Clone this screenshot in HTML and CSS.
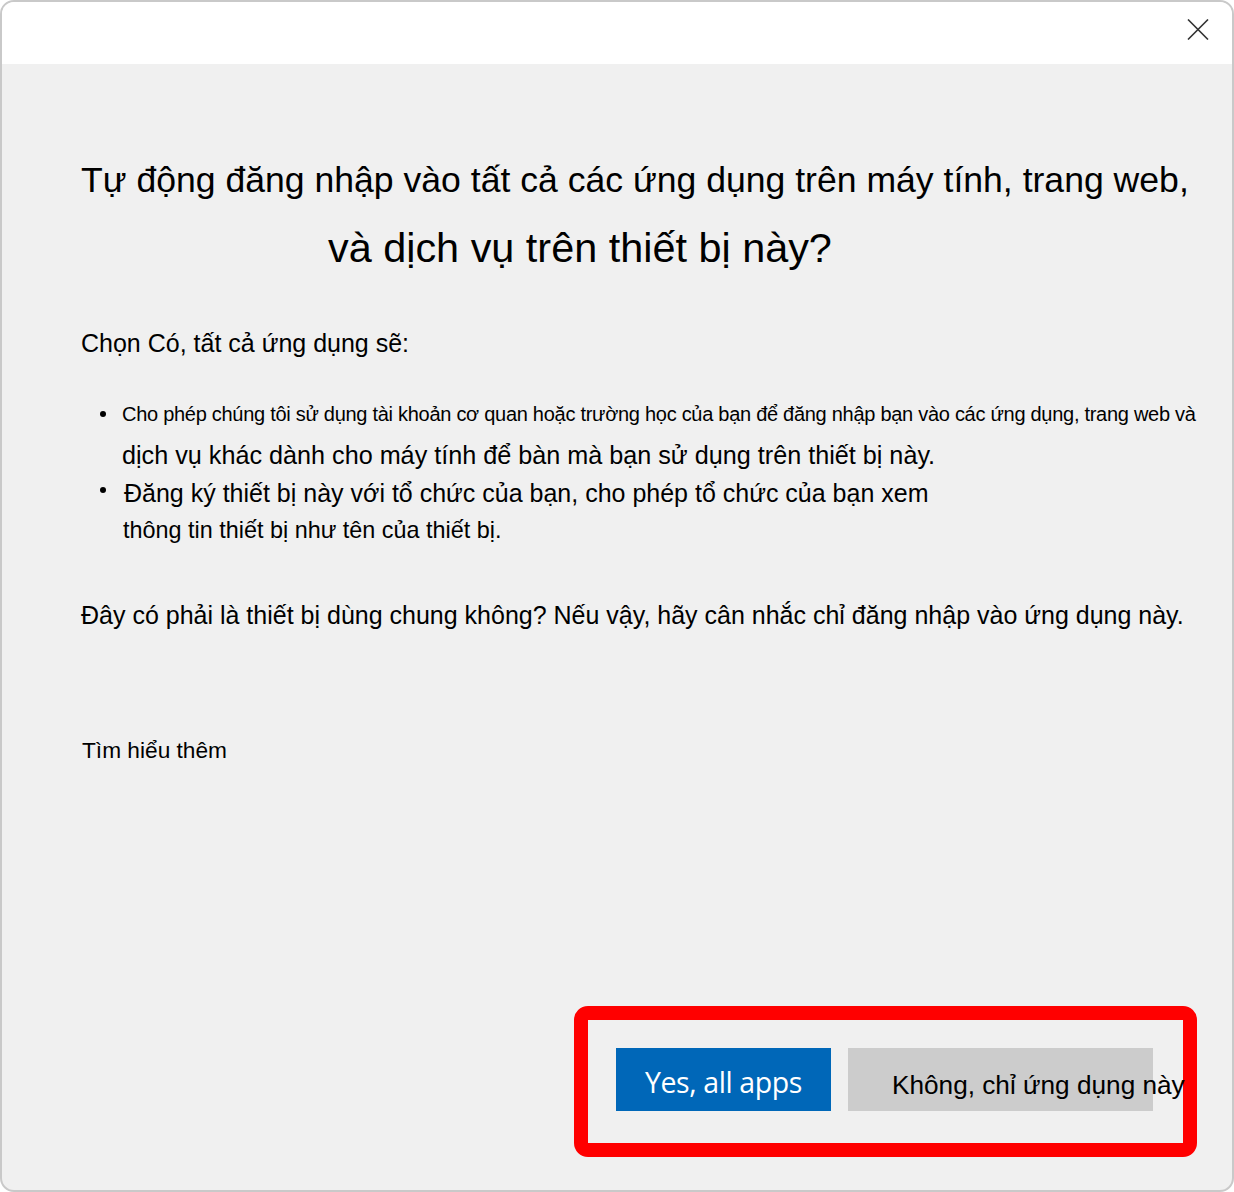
FILE: index.html
```html
<!DOCTYPE html>
<html lang="vi">
<head>
<meta charset="utf-8">
<title>Đăng nhập</title>
<link rel="stylesheet" href="styles.css">
</head>
<body>
<div class="window">
  <div class="header">
    <button class="close" aria-label="Đóng">
      <svg width="22" height="21" viewBox="0 0 22 21"><path d="M1 0.5 L21 20.5 M21 0.5 L1 20.5" stroke="#333" stroke-width="1.6" fill="none"/></svg>
    </button>
  </div>
  <div class="content">
    <h1 class="title">
      <span class="t1">Tự động đăng nhập vào tất cả các ứng dụng trên máy tính, trang web,</span>
      <span class="t2">và dịch vụ trên thiết bị này?</span>
    </h1>
    <p class="lead">Chọn Có, tất cả ứng dụng sẽ:</p>
    <ul class="list">
      <li class="item">
        <span class="dotcol"><span class="dot d1"></span></span>
        <span class="itext">
          <span class="l1">Cho phép chúng tôi sử dụng tài khoản cơ quan hoặc trường học của bạn để đăng nhập bạn vào các ứng dụng, trang web và</span>
          <span class="l2">dịch vụ khác dành cho máy tính để bàn mà bạn sử dụng trên thiết bị này.</span>
        </span>
      </li>
      <li class="item">
        <span class="dotcol"><span class="dot d2"></span></span>
        <span class="itext">
          <span class="l3">Đăng ký thiết bị này với tổ chức của bạn, cho phép tổ chức của bạn xem</span>
          <span class="l4">thông tin thiết bị như tên của thiết bị.</span>
        </span>
      </li>
    </ul>
    <p class="shared">Đây có phải là thiết bị dùng chung không? Nếu vậy, hãy cân nhắc chỉ đăng nhập vào ứng dụng này.</p>
    <p class="learn">Tìm hiểu thêm</p>
    <div class="footer">
      <div class="highlight">
        <button class="btn yes">Yes, all apps</button>
        <button class="btn no"><span>Không, chỉ ứng dụng này</span></button>
      </div>
    </div>
  </div>
</div>
</body>
</html>
```
FILE: styles.css
```css
html, body {
  margin: 0;
  padding: 0;
  background: #ffffff;
}
body {
  font-family: "Liberation Sans", Arial, sans-serif;
  color: #000;
}
.window {
  box-sizing: border-box;
  width: 1234px;
  height: 1192px;
  border: 2px solid #c9c9c9;
  border-radius: 14px;
  overflow: hidden;
  display: flex;
  flex-direction: column;
  background: #f0f0f0;
}
.header {
  height: 62px;
  flex: none;
  background: #ffffff;
  display: flex;
  justify-content: flex-end;
  align-items: flex-start;
  padding: 17px 23px 0 0;
  box-sizing: border-box;
}
.close {
  border: 0;
  background: transparent;
  padding: 0;
  margin: 0;
  width: 22px;
  height: 21px;
  display: block;
}
.close svg { display: block; }
.content {
  flex: 1;
  display: flex;
  flex-direction: column;
  padding-left: 79px;
}
.title {
  margin: 81px 0 0 0;
  font-weight: 400;
  font-size: 35.6px;
  line-height: 70px;
}
.title span { display: block; white-space: nowrap; }
.title .t2 {
  padding-left: 247px;
  font-size: 41.4px;
  line-height: 66px;
}
.lead {
  margin: 44px 0 0 0;
  font-size: 25px;
  line-height: 36px;
}
.list {
  list-style: none;
  margin: 38px 0 0 0;
  padding: 0;
}
.item {
  display: flex;
}
.dotcol {
  width: 41px;
  flex: none;
}
.dot {
  display: block;
  width: 6px;
  height: 6px;
  border-radius: 50%;
  background: #000;
  margin-left: 19px;
}
.d1 { margin-top: 12px; }
.d2 { margin-top: 14px; }
.itext span { display: block; white-space: nowrap; }
.l1 {
  font-size: 20px;
  line-height: 30px;
  letter-spacing: -0.28px;
}
.l2 {
  font-size: 25.2px;
  line-height: 36px;
  margin-top: 8px;
}
.l3 {
  font-size: 25px;
  line-height: 36px;
  margin-top: 2px;
  padding-left: 2px;
}
.l4 {
  font-size: 23.4px;
  line-height: 36px;
  margin-top: 1px;
  padding-left: 1px;
}
.shared {
  margin: 49px 0 0 0;
  font-size: 25px;
  line-height: 36px;
  white-space: nowrap;
}
.learn {
  margin: 99px 0 0 1px;
  font-size: 22.7px;
  line-height: 36px;
}
.footer {
  margin-top: auto;
  display: flex;
  justify-content: flex-end;
  padding: 0 35px 33px 0;
}
.highlight {
  width: 623px;
  height: 151px;
  box-sizing: border-box;
  border: 14px solid #ff0000;
  border-radius: 14px;
  display: flex;
  align-items: flex-start;
  gap: 17px;
  padding: 28px 0 0 28px;
}
.btn {
  border: 0;
  margin: 0;
  height: 63px;
  padding: 0;
  white-space: nowrap;
  flex: none;
}
.yes {
  width: 215px;
  background: #0067b8;
  color: #ffffff;
  font-family: "Open Sans", "Noto Sans", sans-serif;
  font-size: 28.5px;
  letter-spacing: -0.4px;
  line-height: 63px;
  padding-top: 3px;
  box-sizing: border-box;
}
.no {
  width: 305px;
  background: #cccccc;
  color: #000;
  font-family: "Liberation Sans", Arial, sans-serif;
  font-size: 26.2px;
  text-align: left;
  padding: 11px 0 0 44px;
  overflow: visible;
  box-sizing: border-box;
  line-height: 52px;
}
```
